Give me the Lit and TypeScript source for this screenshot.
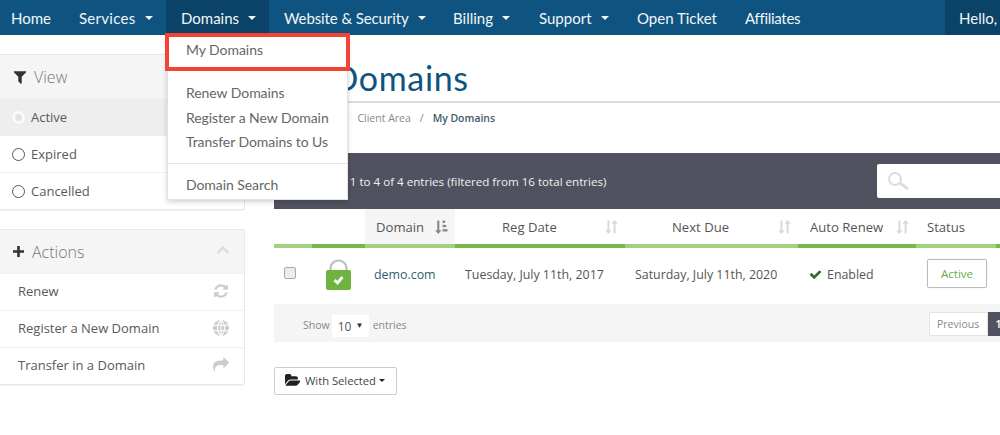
import { LitElement, html, css, svg } from "lit";
import { customElement } from "lit/decorators.js";

const icon = (d: string, size: number, vb = "0 0 1792 1792") =>
  html`<svg class="ic" width=${size} height=${size} viewBox=${vb} fill="currentColor"><path d=${d}></path></svg>`;
const FILTER = "M1595 295q17 41-14 70l-493 493v742q0 42-39 59-13 5-25 5-27 0-45-19l-256-256q-19-19-19-45v-486l-493-493q-31-29-14-70 17-39 59-39h1280q42 0 59 39z";
const REFRESH = "M1639 1056q0 5-1 7-64 268-268 434.5t-478 166.5q-146 0-282.5-55t-243.5-157l-129 129q-19 19-45 19t-45-19-19-45v-448q0-26 19-45t45-19h448q26 0 45 19t19 45-19 45l-137 137q71 66 161 102t187 36q134 0 250-65t186-179q11-17 53-117 8-23 30-23h192q13 0 22.5 9.5t9.5 22.5zm25-800v448q0 26-19 45t-45 19h-448q-26 0-45-19t-19-45 19-45l138-138q-148-137-349-137-134 0-250 65t-186 179q-11 17-53 117-8 23-30 23h-199q-13 0-22.5-9.5t-9.5-22.5v-7q65-268 270-434.5t480-166.5q146 0 284 55.5t245 156.5l130-129q19-19 45-19t45 19 19 45z";
const SHARE = "M1792 640q0 26-19 45l-512 512q-19 19-45 19t-45-19-19-45v-256h-224q-98 0-175.5 6t-154 21.5-133 42.5-105.5 69.5-80 101-48.5 138.5-17.5 181q0 55 5 123 0 6 2.5 23.5t2.5 26.5q0 15-8.5 25t-23.5 10q-16 0-28-17-7-9-13-22t-13.5-30-10.5-24q-127-285-127-451 0-199 53-333 162-403 875-403h224v-256q0-26 19-45t45-19 45 19l512 512q19 19 19 45z";
const CHECK = "M1671 566q0 40-28 68l-724 724-136 136q-28 28-68 28t-68-28l-136-136-362-362q-28-28-28-68t28-68l136-136q28-28 68-28t68 28l294 295 656-657q28-28 68-28t68 28l136 136q28 28 28 68z";
const FOLDER = "M1879 952q0 31-31 66l-336 396q-43 51-120.5 86.5t-143.5 35.5h-1088q-34 0-60.5-13t-26.5-43q0-31 31-66l336-396q43-51 120.5-86.5t143.5-35.5h1088q34 0 60.5 13t26.5 43zm-343-344v160h-832q-94 0-197 47.5t-164 119.5l-337 396-5 6q0-4-.5-12.5t-.5-12.5v-960q0-92 66-158t158-66h320q92 0 158 66t66 158v32h544q92 0 158 66t66 158z";

const sortIcon = (active: boolean) => html`<svg class="sort ${active ? "on" : ""}" width="15" height="16" viewBox="0 0 14 14" fill="currentColor">
  ${active
    ? svg`<path d="M3 1h2v9h2l-3 3.500L1 10h2z"/><rect x="8" y="1" width="2.400" height="2.200"/><rect x="8" y="5" width="3.400" height="2.200"/><rect x="8" y="9" width="4.600" height="2.200"/>`
    : svg`<path d="M3.200 1h1.800v9h2l-2.900 3.500L1.200 10h2z"/><path d="M9 13h1.800V4h2L9.900.5 7 4h2z"/>`}
</svg>`;

@customElement("app-root")
export class AppRoot extends LitElement {
  static styles = css`
    :host { display: block; width: 1000px; height: 435px; overflow: hidden; position: relative; background: #fff; font-family: "Open Sans", sans-serif; color: #58595b; }
    * { box-sizing: border-box; }
    .ic { display: block; flex: none; }
    nav { height: 35px; background: #0f5480; display: flex; align-items: stretch; color: #f2f6f9; font: 15px/34px "Lato", sans-serif; padding-left: 11px; white-space: nowrap; }
    nav a { display: flex; align-items: center; flex: none; }
    nav .caret { width: 0; height: 0; border-left: 4px solid transparent; border-right: 4px solid transparent; border-top: 4px solid #f2f6f9; margin-left: 9px; }
    .home { width: 68px; } .serv { width: 87px; letter-spacing: .28px; }
    .dom { width: 103px; padding-left: 15px; background: #0a4268; }
    .web { width: 184px; padding-left: 15px; letter-spacing: -.1px; } .bill { width: 86px; }
    .sup { width: 98px; } .tick { width: 108px; } .aff { width: 200px; letter-spacing: -.3px; }
    nav a.hello { flex: 1; background: #0a4268; padding-left: 14px; }

    .page { display: flex; align-items: flex-start; }
    aside { width: 245px; flex: none; padding-top: 19px; display: flex; flex-direction: column; gap: 19px; }
    .panel { border: 1px solid #e8e8e8; border-left: 0; border-radius: 0 3px 3px 0; box-shadow: 0 1px 1px rgba(0,0,0,.05); }
    .phead { height: 44px; background: #f5f5f5; display: flex; align-items: center; padding: 0 12px; font-size: 16px; font-weight: 300; color: #777; gap: 6px; }
    .phead.short { height: 43px; gap: 7px; }
    .phead .ic { color: #333; }
    .phead .chev { margin: -3px 2px 0 auto; color: #ddd; }
    .row { height: 37px; display: flex; align-items: center; font-size: 13px; border-top: 1px solid #f0f0f0; }
    .radio { padding-left: 12px; gap: 6px; }
    .radio i { width: 13px; height: 13px; border-radius: 50%; border: 1.5px solid #555; display: block; }
    .radio.act { background: #eee; border-top: 0; height: 36px; }
    .radio.act i { border: 3px solid #fafafa; background: #e4e4e4; }
    .link { padding: 0 15px 2px 18px; justify-content: space-between; color: #58595b; }
    .link .ic { color: #ccc; }

    main { flex: 1; min-width: 0; padding: 0 0 0 29px; margin-right: -200px; }
    h1 { margin: 0; padding-top: 21px; height: 68px; font: 400 34px/44px "Lato", sans-serif; color: #0f5480; letter-spacing: 0.65px; border-bottom: 2px solid #ddd; white-space: nowrap; }
    .crumb { height: 50px; padding-top: 7px; font-size: 10.5px; line-height: 16px; color: #888; display: flex; gap: 9px; }
    .crumb b { font-weight: 600; font-size: 10.4px; color: #3d5a6c; }
    .bar { height: 56px; background: #50535f; color: #f0f0f0; font-size: 11.6px; display: flex; align-items: center; padding-left: 27px; }
    .count { width: 306px; flex: none; white-space: nowrap; }
    .search { width: 200px; height: 34px; margin-left: 270px; flex: none; background: #fff; border-radius: 2px; padding-left: 10px; color: #ddd; display: flex; align-items: center; }
    .cols { display: flex; height: 39px; font-size: 13.1px; color: #555; }
    .cols > div { display: flex; align-items: center; height: 39px; border-bottom: 4px solid #a0d080; position: relative; flex: none; }
    .cols > .d { border-bottom-color: #76b947; }
    .sort { position: absolute; right: 6px; top: 10px; color: #d8d8d8; }
    .sort.on { color: #888; }
    .h1 { width: 38px; } .h2 { width: 53px; }
    .h3 { width: 90px; padding-left: 11px; background: #f5f5f5; }
    .h4 { width: 170px; padding-left: 47px; } .h5 { width: 173px; padding-left: 47px; }
    .h6 { width: 118px; padding-left: 12px; } .h7 { width: 80px; padding-left: 11px; } .h8 { width: 200px; }
    .body { display: flex; height: 56px; align-items: center; font-size: 12.4px; color: #555; padding-bottom: 4px; }
    .body > div { flex: none; }
    .b1 { width: 51px; } .b2 { width: 49px; } .b3 { width: 91px; } .b4 { width: 170px; } .b5 { width: 174px; } .b6 { width: 118px; }
    .lock { display: block; margin-left: 1px; }
    .cb { width: 12px; height: 12px; background: #ececec; border: 1px solid #aaa; border-radius: 2px; margin-left: 10px; margin-top: -3px; }
    .tld { color: #2f5f70; font-weight: 500; }
    .en { display: flex; align-items: center; gap: 5px; }
    .en .ic { color: #33662f; }
    .st { width: 60px; height: 29px; border: 1px solid #bbb; border-radius: 2px; color: #6aa84f; font-size: 11.5px; display: flex; align-items: center; justify-content: center; box-shadow: 0 0 1px #ccc; font-weight: 500; margin-top: -1px; }
    .foot { height: 38px; background: #f5f5f5; display: flex; align-items: center; font-size: 10.5px; color: #888; padding: 2px 0 0 29px; }
    .foot > span { padding-top: 2px; }
    .sel { width: 37px; height: 22px; background: #fff; margin: 4px 4px 0 2px; display: flex; align-items: center; padding-left: 6px; font-size: 12px; color: #555; gap: 4px; }
    .tri { font-size: 8px; color: #333; margin-top: -3px; }
    .pg { margin-left: 522px; height: 24px; display: flex; font-size: 10.5px; }
    .pg span { background: #fff; border: 1px solid #e4e4e4; width: 59px; display: flex; align-items: center; justify-content: center; border-radius: 2px 0 0 2px; }
    .pg b { background: #50535f; color: #fff; width: 30px; display: flex; align-items: center; padding-left: 8px; font-weight: 600; }
    .wbtn { margin-top: 25px; width: 123px; height: 28px; border: 1px solid #ccc; border-radius: 2px; background: #fff; display: flex; align-items: center; font-size: 11.2px; line-height: 24px; color: #444; padding: 0 0 1px 10px; gap: 5px; white-space: nowrap; }
    .wbtn .ic { color: #222; }
    .wbtn em { width: 0; height: 0; border-left: 3.5px solid transparent; border-right: 3.5px solid transparent; border-top: 3.5px solid #222; margin-left: -2px; }

    .menu { position: absolute; left: 167px; top: 35px; width: 181px; height: 165px; background: #fff; border: 1px solid #e2e2e2; box-shadow: 0 2px 5px rgba(0,0,0,.18); padding: 45px 0 0 18px; font: 14px/24.5px "Lato", sans-serif; color: #666; letter-spacing: -.06px; }
    .menu div { white-space: nowrap; }
    .menu hr { border: 0; border-top: 1px solid #e5e5e5; margin: 8px 0 9px -18px; }
    .hl { position: absolute; left: 165px; top: 33px; width: 185px; height: 38px; border: 4px solid #f44336; background: #fff; font: 14px/26px "Lato", sans-serif; color: #666; padding-left: 17px; letter-spacing: -.06px; }
  `;

  render() {
    return html`
      <nav>
        <a class="home">Home</a>
        <a class="serv">Services<i class="caret"></i></a>
        <a class="dom">Domains<i class="caret"></i></a>
        <a class="web">Website &amp; Security<i class="caret"></i></a>
        <a class="bill">Billing<i class="caret"></i></a>
        <a class="sup">Support<i class="caret"></i></a>
        <a class="tick">Open Ticket</a>
        <a class="aff">Affiliates</a>
        <a class="hello">Hello, Demo!</a>
      </nav>
      <div class="page">
        <aside>
          <section class="panel">
            <div class="phead">${icon(FILTER, 16)}<span>View</span></div>
            <div class="row radio act"><i></i>Active</div>
            <div class="row radio"><i></i>Expired</div>
            <div class="row radio"><i></i>Cancelled</div>
          </section>
          <section class="panel">
            <div class="phead short">
              <svg class="ic" width="13" height="13" viewBox="0 0 13 13" fill="currentColor"><path d="M5.200 1h2.600v4.200H12v2.600H7.800V12H5.200V7.800H1V5.200h4.200z"/></svg>
              <span>Actions</span>
              <svg class="ic chev" width="14" height="10" viewBox="0 0 14 10" fill="none" stroke="currentColor" stroke-width="2.500"><path d="M1.500 8 7 2.500 12.500 8"/></svg>
            </div>
            <div class="row link">Renew ${icon(REFRESH, 16)}</div>
            <div class="row link">Register a New Domain
              <svg class="ic" width="16" height="16" viewBox="0 0 15 15" fill="none" stroke="#fff" stroke-width="1"><circle cx="7.500" cy="7.500" r="7.500" fill="#ccc" stroke="none"/><path d="M0 5h15M0 10h15M7.500 0v15M7.500 0C3 4 3 11 7.500 15M7.500 0c4.500 4 4.500 11 0 15"/></svg>
            </div>
            <div class="row link">Transfer in a Domain ${icon(SHARE, 16)}</div>
          </section>
        </aside>
        <main>
          <h1>My Domains</h1>
          <div class="crumb"><span>Portal Home</span><span>/</span><span>Client Area</span><span>/</span><b>My Domains</b></div>
          <div class="bar">
            <span class="count">Showing 1 to 4 of 4 entries (filtered from 16 total entries)</span>
            <div class="search">
              <svg width="24" height="20" viewBox="0 0 24 20" fill="none" stroke="currentColor"><circle cx="8" cy="8" r="6" stroke-width="2"/><path d="m13 12 8 6" stroke-width="3"/></svg>
            </div>
          </div>
          <div class="cols">
            <div class="h1"></div>
            <div class="h2 d"></div>
            <div class="h3">Domain${sortIcon(true)}</div>
            <div class="h4 d">Reg Date${sortIcon(false)}</div>
            <div class="h5">Next Due${sortIcon(false)}</div>
            <div class="h6 d">Auto Renew${sortIcon(false)}</div>
            <div class="h7">Status</div>
            <div class="h8 d"></div>
          </div>
          <div class="body">
            <div class="b1"><div class="cb"></div></div>
            <div class="b2">
              <svg class="lock" width="25" height="31" viewBox="0 0 25 31"><path d="M4.500 13V9.500a8 8 0 0 1 16 0V13" fill="none" stroke="#bdbdbd" stroke-width="2.200"/><rect x="0" y="11" width="25" height="20" rx="2" fill="#6db33f"/><path d="m8.500 21 3 3 5-6" fill="none" stroke="#fff" stroke-width="2.800"/></svg>
            </div>
            <div class="b3 tld">demo.com</div>
            <div class="b4">Tuesday, July 11th, 2017</div>
            <div class="b5">Saturday, July 11th, 2020</div>
            <div class="b6 en">${icon(CHECK, 13)}Enabled</div>
            <div class="st">Active</div>
          </div>
          <div class="foot"><span>Show</span><div class="sel">10<span class="tri">▼</span></div><span>entries</span>
            <div class="pg"><span>Previous</span><b>1</b></div>
          </div>
          <div class="wbtn">${icon(FOLDER, 15)}With Selected<em></em></div>
        </main>
      </div>
      <div class="menu">
        <div>Renew Domains</div>
        <div>Register a New Domain</div>
        <div>Transfer Domains to Us</div>
        <hr />
        <div>Domain Search</div>
      </div>
      <div class="hl">My Domains</div>
    `;
  }
}
